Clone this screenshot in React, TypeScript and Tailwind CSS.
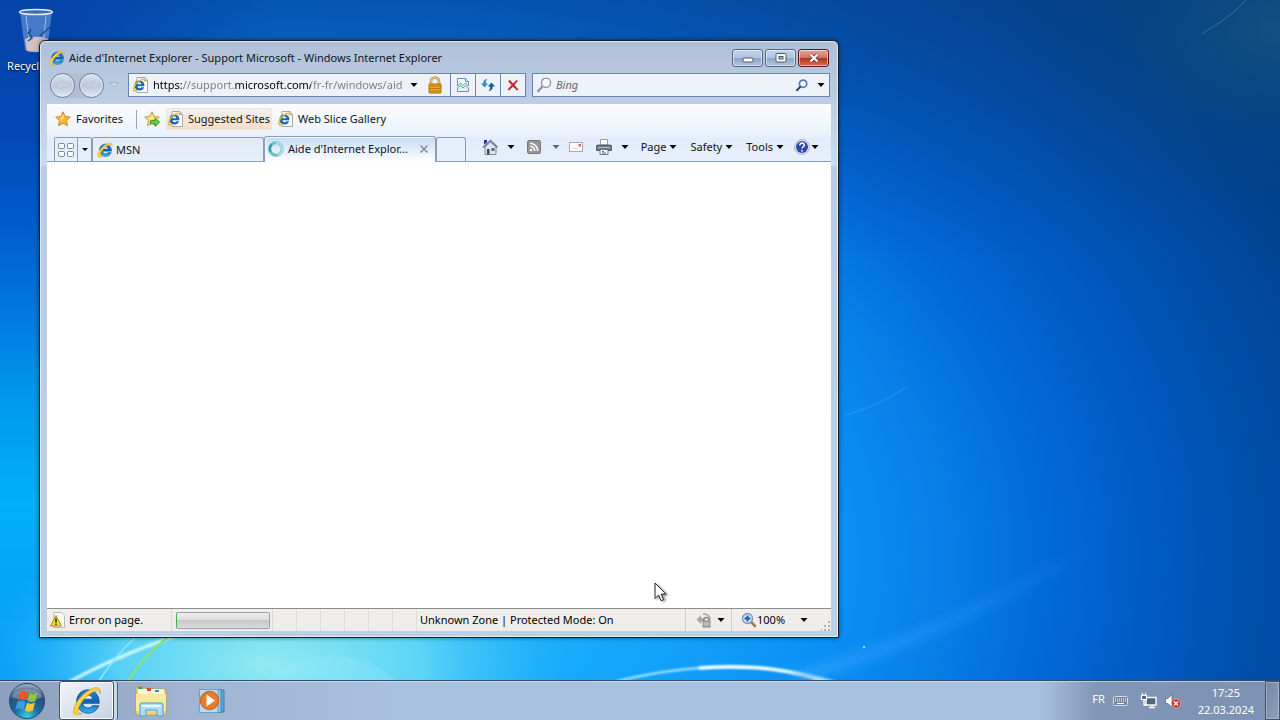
import React from "react";

function IeIcon({ className }: { className: string }) {
  return (
    <svg viewBox="0 0 32 32" className={className} aria-hidden="true">
      <defs>
        <linearGradient id="ie-blue" x1="0" y1="0" x2="0" y2="1">
          <stop offset="0" stopColor="#2a83cc" />
          <stop offset="0.5" stopColor="#0f63b4" />
          <stop offset="1" stopColor="#37b6ee" />
        </linearGradient>
      </defs>
      <path
        d="M17 4C10 4 5 9.500 5 16.500S10 29 17 29c5.500 0 10-3.200 11.600-8h-7c-.9 1.500-2.600 2.400-4.600 2.400-3.200 0-5.300-2-5.500-4.900H29C29.600 10.500 24.500 4 17 4zm-5.300 10.200c.5-2.700 2.500-4.600 5.300-4.600s4.800 1.900 5.200 4.600z"
        fill="url(#ie-blue)"
        stroke="#0c4a8c"
        strokeWidth="0.800"
      />
      <path
        d="M30 8.500C31.500 2 27 .2 20.500 3.200 11.500 7.500 3.500 17 1.800 25c-1.200 6 3.200 7.300 9 4-4 .8-5.200-1.200-4-5C9 17.500 15 10.500 22.500 6.400c4-2.200 7-2 7.500 2.100z"
        fill="#fbd240"
        stroke="#cf9718"
        strokeWidth="0.700"
      />
    </svg>
  );
}

function IePage() {
  return (
    <svg viewBox="0 0 16 16" className="size-4 shrink-0" aria-hidden="true">
      <path d="M4 .5h8l2.500 3v12H4z" fill="#fdfdfd" stroke="#a7a7a7" />
      <path d="M12 .5v3h2.500" fill="none" stroke="#a7a7a7" />
      <path
        d="M6.500 3.500a5 5 0 1 0 4.600 6.800H8.500c-.4.600-1 .9-1.900.9-1.300 0-2.100-.7-2.200-1.900h7c.3-3.200-1.700-5.800-4.900-5.800zM4.500 7.300c.2-1 1-1.700 2-1.700s1.800.7 2 1.700z"
        fill="#1668b4"
      />
      <path d="M11.300 4.600c.9-2.500-1-2.800-3.700-1.400C4.300 5 1.200 8.800.8 11.800c-.3 2.200 1.100 2.700 3 1.700" fill="none" stroke="#ecb92a" strokeWidth="1.500" />
    </svg>
  );
}

function Caret({ className = "text-black" }: { className?: string }) {
  return (
    <svg viewBox="0 0 8 4" className={`h-1 w-2 shrink-0 ${className}`} aria-hidden="true">
      <path d="M.5 0h7L4 4z" fill="currentColor" />
    </svg>
  );
}

function Star({ arrow = false }: { arrow?: boolean }) {
  return (
    <svg viewBox="0 0 16 16" className="size-4 shrink-0" aria-hidden="true">
      <path
        d="M8 .8l2.200 4.700 5.100.6-3.800 3.500 1 5.100L8 12.200l-4.500 2.500 1-5.100L.7 6.100l5.100-.6z"
        fill={arrow ? "#f7dc6a" : "#fbb62c"}
        stroke={arrow ? "#a99a3a" : "#c97d14"}
        strokeWidth="0.900"
      />
      <path d="M8 3l1.300 3.300-3.800 4.500.5-3.300L3.200 7l3.300-.6z" fill="#fff1a8" opacity="0.700" />
      {arrow && <path d="M6.500 9.700H11V7.300l4.600 3.900L11 15.200v-2.400H6.500z" fill="#6fd044" stroke="#2a8a1d" strokeWidth="0.900" />}
    </svg>
  );
}

function RoundNav({ label, flip = false }: { label: string; flip?: boolean }) {
  return (
    <button
      aria-label={label}
      className="flex size-[25px] shrink-0 items-center justify-center rounded-full border border-[#6d7f98] bg-linear-to-b from-[#dde5ef] via-[#b9c8da] to-[#dfe9f4] shadow-[inset_0_0_0_1px_#e4ebf4]"
    >
      <svg viewBox="0 0 16 16" className={flip ? "size-4 rotate-180" : "size-4"} aria-hidden="true">
        <path d="M2 8l5-5v3.500h7v3H7V13z" fill="#c6d3e2" stroke="#b3c1d3" strokeWidth="0.500" />
      </svg>
    </button>
  );
}

function Wallpaper() {
  return (
    <svg viewBox="0 0 1280 720" preserveAspectRatio="none" className="absolute inset-0 h-full w-full" aria-hidden="true">
      <defs>
        <radialGradient id="sky" gradientUnits="userSpaceOnUse" cx="0" cy="0" r="1" gradientTransform="translate(300 560) scale(1300 950)">
          <stop offset="0" stopColor="#35c3fa" />
          <stop offset="0.250" stopColor="#16a8fb" />
          <stop offset="0.420" stopColor="#0a8ff4" />
          <stop offset="0.500" stopColor="#067ee6" />
          <stop offset="0.570" stopColor="#026ada" />
          <stop offset="0.650" stopColor="#005cc4" />
          <stop offset="0.730" stopColor="#004fac" />
          <stop offset="0.830" stopColor="#00438e" />
          <stop offset="1" stopColor="#003e80" />
        </radialGradient>
        <radialGradient id="dusk" gradientUnits="userSpaceOnUse" cx="0" cy="0" r="1" gradientTransform="translate(1280 30) scale(300 200)">
          <stop offset="0" stopColor="#18547e" stopOpacity="0.800" />
          <stop offset="0.400" stopColor="#0d4a7e" stopOpacity="0.400" />
          <stop offset="1" stopColor="#00438e" stopOpacity="0" />
        </radialGradient>
        <radialGradient id="glow" gradientUnits="userSpaceOnUse" cx="0" cy="0" r="1" gradientTransform="translate(270 665) scale(300 150)">
          <stop offset="0" stopColor="#93eaf0" />
          <stop offset="0.500" stopColor="#70e0f5" stopOpacity="0.750" />
          <stop offset="1" stopColor="#30c0fa" stopOpacity="0" />
        </radialGradient>
        <linearGradient id="shade" x1="0" y1="0" x2="0" y2="1">
          <stop offset="0" stopColor="#0b3f86" stopOpacity="0.450" />
          <stop offset="1" stopColor="#0b3f86" stopOpacity="0" />
        </linearGradient>
        <linearGradient id="edge" x1="0" y1="0" x2="0" y2="1">
          <stop offset="0" stopColor="#0643a8" />
          <stop offset="0.180" stopColor="#0348b4" />
          <stop offset="0.300" stopColor="#0059cb" />
          <stop offset="0.440" stopColor="#007ae0" />
          <stop offset="0.560" stopColor="#009aec" />
          <stop offset="0.700" stopColor="#02b0f6" />
          <stop offset="0.820" stopColor="#04a4fb" />
          <stop offset="0.950" stopColor="#0398f4" />
        </linearGradient>
        <linearGradient id="fade" x1="0" y1="0" x2="1" y2="0">
          <stop offset="0.200" stopColor="#fff" />
          <stop offset="1" stopColor="#000" />
        </linearGradient>
        <linearGradient id="beam" x1="0" y1="1" x2="1" y2="0">
          <stop offset="0" stopColor="#3aa8ff" stopOpacity="0.500" />
          <stop offset="1" stopColor="#2c8cff" stopOpacity="0" />
        </linearGradient>
        <mask id="edge-mask">
          <rect width="260" height="720" fill="url(#fade)" />
        </mask>
        <filter id="soft" x="-20%" y="-50%" width="140%" height="200%">
          <feGaussianBlur stdDeviation="1.200" />
        </filter>
        <filter id="softer" x="-20%" y="-50%" width="140%" height="200%">
          <feGaussianBlur stdDeviation="5" />
        </filter>
      </defs>
      <rect width="1280" height="720" fill="url(#sky)" />
      <rect width="1280" height="260" fill="url(#shade)" />
      <rect width="1280" height="720" fill="url(#dusk)" />
      <rect width="260" height="720" fill="url(#edge)" mask="url(#edge-mask)" />
      <rect width="1280" height="720" fill="url(#glow)" />
      <ellipse cx="330" cy="700" rx="72" ry="44" fill="#9cecff" opacity="0.250" />
      <g fill="none" strokeLinecap="round">
        <path d="M66 684C100 664 140 648 186 632" stroke="#d4fbff" strokeWidth="3" filter="url(#soft)" />
        <path d="M98 682c14-20 26-36 44-50" stroke="#8eeaff" strokeWidth="1.500" />
        <path d="M126 684c14-22 28-38 52-54" stroke="#86e27c" strokeWidth="2.500" />
        <path d="M618 681c40-10 90-16 130-14 40 2 66 8 96 18" stroke="#b8f0ff" strokeWidth="2" filter="url(#soft)" />
        <path d="M700 668c54-3 92 1 134 17" stroke="#ffffff" strokeWidth="3" filter="url(#soft)" />
        <path d="M800 676C900 650 1010 596 1100 540" stroke="url(#beam)" strokeWidth="14" filter="url(#softer)" />
        <path d="M845 415c20-5 40-14 62-28" stroke="#3aa5f2" strokeWidth="1" opacity="0.600" />
        <path d="M1202 34c14-10 28-16 44-34" stroke="#4f8cb8" strokeWidth="1" opacity="0.600" />
      </g>
      <circle cx="864" cy="647" r="1.200" fill="#9fd8ff" />
    </svg>
  );
}

function RecycleBin() {
  return (
    <a href="#recycle-bin" className="absolute top-2 left-1 flex w-[64px] flex-col items-center gap-1 text-[11px] leading-4 text-white">
      <svg viewBox="0 0 40 46" className="h-[46px] w-10" aria-hidden="true">
        <path d="M4 4l5 38c1 3 21 3 22 0l5-38z" fill="#7ba5dc" opacity="0.550" />
        <path d="M9 31l1.500 11c2 2.500 18 2.500 20 0L32 31c-6-3-17-3-23 0z" fill="#e6c6b8" opacity="0.900" />
        <path d="M10 8l4 32M30 8l-3 32" stroke="#bcd7f5" strokeWidth="1" opacity="0.700" />
        <path d="M12 24l4 6-4 3M15 21l-2 4M34 19l-10 9" fill="none" stroke="#174d93" strokeWidth="1.500" />
        <ellipse cx="20" cy="4" rx="16.500" ry="2.600" fill="#3d6eb2" stroke="#dbe8f5" strokeWidth="1.500" />
      </svg>
      <span className="whitespace-nowrap [text-shadow:0_1px_2px_#000]">Recycle Bin</span>
    </a>
  );
}

function TitleBar() {
  const base =
    "flex h-[18px] w-[31px] items-center justify-center rounded-[3px] border shadow-[inset_0_0_0_1px_rgba(255,255,255,0.5)]";
  const plain = " border-[#54678a] bg-[linear-gradient(#c3d3e8_0,#b2c5de_50%,#8ea7c8_50%,#adc5e0_100%)]";
  return (
    <header className="flex h-[31px] items-center gap-1 pt-[3px] pl-[2px]">
      <IeIcon className="size-4 shrink-0" />
      <h1 className="min-w-0 flex-1 truncate">Aide d'Internet Explorer - Support Microsoft - Windows Internet Explorer</h1>
      <div className="flex gap-[2px] pr-[2px]">
        <button aria-label="Minimize" className={base + plain}>
          <svg viewBox="0 0 12 10" className="h-[10px] w-3" aria-hidden="true">
            <rect x="1" y="5" width="10" height="4" rx="1" fill="#fff" stroke="#4e5a6e" />
          </svg>
        </button>
        <button aria-label="Maximize" className={base + plain}>
          <svg viewBox="0 0 12 10" className="h-[10px] w-3" aria-hidden="true">
            <rect x="1" y=".5" width="10" height="8.500" rx="1" fill="#fff" stroke="#4e5a6e" />
            <rect x="4" y="3.500" width="4" height="2.500" fill="#9fb6d3" stroke="#4e5a6e" />
          </svg>
        </button>
        <button
          aria-label="Close"
          className={base + " border-[#5c1a20] bg-[linear-gradient(#e3a398_0,#d17263_50%,#b5301c_50%,#d0704f_100%)]"}
        >
          <svg viewBox="0 0 12 10" className="h-[10px] w-3" aria-hidden="true">
            <path d="M2.500 1.500l7 7m0-7l-7 7" stroke="#5a3a40" strokeWidth="3.600" />
            <path d="M2.500 1.500l7 7m0-7l-7 7" stroke="#fff" strokeWidth="2.200" />
          </svg>
        </button>
      </div>
    </header>
  );
}

function Navigation() {
  const cell = "flex h-full w-[25px] shrink-0 items-center justify-center border-l border-[#6a85ab]";
  return (
    <div className="mb-[6px] flex h-[26px] items-center">
      <div className="ml-[3px] flex gap-1 rounded-full bg-[#b0bfd2]">
        <RoundNav label="Back" />
        <RoundNav label="Forward" flip />
      </div>
      <button aria-label="Recent pages" className="ml-1 flex w-3 justify-center">
        <svg viewBox="0 0 10 6" className="h-[6px] w-[10px]" aria-hidden="true">
          <path d="M1 .7h8L5 5z" fill="#cfdcec" stroke="#95a6bf" strokeWidth="0.800" />
        </svg>
      </button>
      <div className="ml-2 flex h-6 w-[398px] shrink items-center border border-[#6a85ab] bg-[#eef3fa]">
        <div className="pl-1"><IePage /></div>
        <input
          aria-label="Address"
          readOnly
          defaultValue="https://support.microsoft.com/fr-fr/windows/aide-d-internet-explorer"
          className="ml-1 min-w-0 flex-1 bg-[linear-gradient(90deg,#000_29px,#7b7b7b_29px,#7b7b7b_82px,#000_82px,#000_158px,#7b7b7b_158px)] bg-clip-text text-transparent outline-none"
        />
        <button aria-label="Show address list" className="flex w-6 justify-center"><Caret /></button>
        <button aria-label="Security report" className="mr-[6px] flex w-[18px] justify-center">
          <svg viewBox="0 0 16 18" className="h-[18px] w-4" aria-hidden="true">
            <path d="M4 9V5.500a4 4 0 0 1 8 0V9" fill="none" stroke="#a98136" strokeWidth="2.600" />
            <path d="M4 9V5.500a4 4 0 0 1 8 0V9" fill="none" stroke="#e9d7a0" strokeWidth="1.200" />
            <rect x="2" y="8" width="12" height="9" rx="0.500" fill="#efa51d" stroke="#a86a0c" />
            <path d="M2.500 10h11M2.500 12.500h11M2.500 15h11" stroke="#b9770f" strokeWidth="0.900" />
          </svg>
        </button>
        <button aria-label="Compatibility view" className={cell}>
          <svg viewBox="0 0 14 16" className="h-4 w-[14px]" aria-hidden="true">
            <path d="M1.500 9V1.500h8l3 3V9l-3-3L7 8.500 4.500 6z" fill="#f1f9f9" stroke="#4d91a5" strokeWidth="0.900" />
            <path d="M9.500 1.500v3h3M1.500 11l3-2.500L7 11l2.500-2.500 3 2.500v3.500h-11z" fill="#dff1f1" stroke="#4d91a5" strokeWidth="0.900" />
          </svg>
        </button>
        <button aria-label="Refresh" className={cell}>
          <svg viewBox="0 0 16 16" className="size-4" aria-hidden="true">
            <path d="M.8 6.500h2.400C3.200 3.600 4.800 2 7.600 1.800 6.200 2.900 5.800 4.200 5.900 6.500h2.400L4.500 10.600z" fill="#3a8fc8" />
            <path d="M15.200 9.500h-2.400c0 2.900-1.600 4.500-4.400 4.700 1.400-1.100 1.800-2.400 1.700-4.700H7.700L11.500 5.400z" fill="#1f5c96" />
          </svg>
        </button>
        <button aria-label="Stop" className={cell}>
          <svg viewBox="0 0 14 14" className="size-[14px]" aria-hidden="true">
            <path d="M2 3l2-1 3 3.500L10.500 2l1.500.8L8.500 7l4 4.500-1.500 1L7 8.700 3 12.500 1.500 11.500 5.500 7z" fill="#c5282c" />
          </svg>
        </button>
      </div>
      <form className="mr-[1px] ml-[6px] flex h-6 min-w-0 flex-1 items-center border border-[#6a85ab] bg-[#eef3fa]" onSubmit={(e) => e.preventDefault()}>
        <svg viewBox="0 0 16 16" className="ml-[3px] size-4 shrink-0" aria-hidden="true">
          <circle cx="10" cy="5.800" r="4.600" fill="#f5f8fb" stroke="#8b939c" strokeWidth="1.300" />
          <path d="M6.600 9.300L1.500 14.800" stroke="#8b939c" strokeWidth="2.200" />
        </svg>
        <input aria-label="Search Bing" placeholder="Bing" className="ml-1 min-w-0 flex-1 bg-transparent italic outline-none placeholder:text-[#666]" />
        <button aria-label="Search" className="flex w-5 justify-center">
          <svg viewBox="0 0 14 14" className="size-[13px]" aria-hidden="true">
            <circle cx="8.700" cy="5" r="3.900" fill="#fff" stroke="#4e7fa8" strokeWidth="1.900" />
            <path d="M6 8L1.500 12.800" stroke="#23466e" strokeWidth="2.200" />
          </svg>
        </button>
        <button aria-label="Search options" className="mr-[-2px] flex w-5 justify-center"><Caret /></button>
      </form>
    </div>
  );
}

function FavoritesBar() {
  return (
    <nav aria-label="Favorites bar" className="flex h-[30px] items-center pl-2">
      <button className="flex items-center gap-[5px]"><Star />Favorites</button>
      <span className="ml-[13px] h-[19px] w-px bg-[#97a5b8]" />
      <button aria-label="Add to Favorites bar" className="ml-[7px]"><Star arrow /></button>
      <a href="#suggested-sites" className="ml-[6px] flex h-[22px] items-center gap-1 border border-[#ebe6e4] bg-linear-to-b from-[#f3f0ef] to-[#f5dec6] pr-[1px] pl-[1px] whitespace-nowrap">
        <IePage />Suggested Sites
      </a>
      <a href="#web-slice-gallery" className="ml-[6px] flex items-center gap-1 whitespace-nowrap">
        <IePage />Web Slice Gallery
      </a>
    </nav>
  );
}

function TabBar() {
  return (
    <div className="flex h-7 items-end border-b border-[#8c9cb4]">
      <div className="ml-[7px] flex h-6 shrink-0 rounded-t-[2px] border border-b-0 border-[#8c9cb4]">
        <button aria-label="Quick tabs" className="flex w-[22px] items-center justify-center">
          <svg viewBox="0 0 16 14" className="h-[14px] w-4" aria-hidden="true">
            <g fill="#f6f8fb" stroke="#7b8799">
              <rect x=".5" y=".5" width="6" height="5" rx="1" />
              <rect x="9.500" y=".5" width="6" height="5" rx="1" />
              <rect x=".5" y="8.500" width="6" height="5" rx="1" />
              <rect x="9.500" y="8.500" width="6" height="5" rx="1" />
            </g>
          </svg>
        </button>
        <button aria-label="Tab list" className="flex w-[14px] items-center justify-center border-l border-[#8c9cb4]">
          <svg viewBox="0 0 6 3" className="h-[3px] w-[6px]" aria-hidden="true"><path d="M0 0h6L3 3z" /></svg>
        </button>
      </div>
      <div role="tablist" className="flex min-w-0 items-end">
        <button role="tab" aria-selected="false" className="flex h-6 w-[172px] min-w-0 items-center gap-[3px] rounded-t-[3px] border border-b-0 border-[#8c9cb4] bg-linear-to-b from-[#e4ebf5] to-[#e6effa] pl-1">
          <IeIcon className="size-4 shrink-0" />MSN
        </button>
        <div className="-mb-px flex h-[26px] w-[172px] min-w-0 items-center rounded-t-[3px] border border-b-0 border-[#8c9cb4] bg-linear-to-b from-[#c5dbf3] to-white pb-[1px] pl-[3px] shadow-[inset_1px_1px_0_#f4f8fd]">
          <button role="tab" aria-selected="true" className="flex min-w-0 flex-1 items-center gap-1 whitespace-nowrap">
            <svg viewBox="0 0 16 16" className="size-4 shrink-0" aria-hidden="true">
              <circle cx="8" cy="8" r="6.200" fill="none" stroke="#6fbcc4" strokeWidth="3" />
              <path d="M8 1.800a6.200 6.200 0 0 1 6.200 6.200c0 3-2 5.200-4.600 6" fill="none" stroke="#a9e2e4" strokeWidth="2" />
              <path d="M2.500 11a6.200 6.200 0 0 1 1.200-7.500" fill="none" stroke="#2b98a5" strokeWidth="2" />
            </svg>
            Aide d'Internet Explor...
          </button>
          <button aria-label="Close tab" className="mr-[6px] flex size-[10px] items-center justify-center">
            <svg viewBox="0 0 10 10" className="size-[10px]" aria-hidden="true">
              <path d="M1.500 1.500l7 7m0-7l-7 7" stroke="#85909e" strokeWidth="1.700" />
            </svg>
          </button>
        </div>
        <button aria-label="New tab" className="h-6 w-[30px] rounded-t-[3px] border border-b-0 border-[#8c9cb4] bg-[#e6effa]" />
      </div>
      <div role="toolbar" aria-label="Command bar" className="mb-[2px] ml-auto flex h-6 items-center pr-3">
        <button aria-label="Home">
          <svg viewBox="0 0 16 16" className="size-4" aria-hidden="true">
            <path d="M3 8v7.500h11V8L8.500 3z" fill="#dfe3ec" stroke="#747f95" strokeWidth="0.900" />
            <path d="M1 8.500L8.500 1.500 15.500 8.500" fill="none" stroke="#6f7c98" strokeWidth="1.600" />
            <path d="M2 1h3v2.500L2 5.500z" fill="#27309e" />
            <path d="M5 10h2.500v5.500H5z" fill="#3d465c" />
            <path d="M9.500 9h3v3h-3z" fill="#59668a" />
          </svg>
        </button>
        <button aria-label="Home options" className="ml-[9px]"><Caret /></button>
        <button aria-label="Feeds" className="ml-[12px]">
          <svg viewBox="0 0 14 14" className="size-[14px]" aria-hidden="true">
            <rect x=".5" y=".5" width="13" height="13" rx="1.500" fill="#969696" stroke="#787878" />
            <circle cx="4" cy="10" r="1.300" fill="#fff" />
            <path d="M3 6.200A4.800 4.800 0 0 1 7.800 11M3 3.200A7.800 7.800 0 0 1 10.800 11" fill="none" stroke="#fff" strokeWidth="1.500" />
          </svg>
        </button>
        <button aria-label="Feed options" className="ml-[11px]"><Caret className="text-[#63686f]" /></button>
        <button aria-label="Read mail" className="ml-[9px]">
          <svg viewBox="0 0 14 10" className="h-[10px] w-[14px]" aria-hidden="true">
            <rect x=".5" y=".5" width="13" height="9" fill="#fbfbfb" stroke="#a7a7ad" />
            <path d="M9.500 2h2.500v2.500H9.500z" fill="#e0694c" />
            <path d="M3 6.500h5" stroke="#d9d9dc" />
          </svg>
        </button>
        <button aria-label="Print" className="ml-[13px]">
          <svg viewBox="0 0 16 16" className="size-4" aria-hidden="true">
            <path d="M4.500.5h7V6h-7z" fill="#fdfdfd" stroke="#9aa0a8" />
            <path d="M1 6h14c.6 1 .9 3 .5 5.500H.5C.1 9 .4 7 1 6z" fill="#6d737c" stroke="#4a4f57" strokeWidth="0.800" />
            <path d="M2 8.500h12" stroke="#b9bec6" />
            <path d="M4 10.500h8v5H4z" fill="#f4f6f9" stroke="#747a84" />
            <path d="M6 12.500h2M6 14h4" stroke="#4d6a9c" />
          </svg>
        </button>
        <button aria-label="Print options" className="ml-[9px]"><Caret /></button>
        <button className="ml-[12px] flex items-center gap-[3px]">Page<Caret /></button>
        <button className="ml-[13px] flex items-center gap-[3px]">Safety<Caret /></button>
        <button className="ml-[13px] flex items-center gap-[3px]">Tools<Caret /></button>
        <button aria-label="Help" className="ml-[10px] flex items-center gap-[1px]">
          <svg viewBox="0 0 16 16" className="size-4" aria-hidden="true">
            <circle cx="8" cy="8" r="7.400" fill="#e8ebf3" stroke="#9ba4bb" strokeWidth="0.800" />
            <circle cx="8" cy="8" r="6" fill="#2c4aa8" />
            <path d="M5.800 6.300c0-3 4.500-2.900 4.500-.3 0 1.700-2.200 1.800-2.200 3.500M8 11v1.600" fill="none" stroke="#fff" strokeWidth="1.600" />
          </svg>
          <Caret />
        </button>
      </div>
    </div>
  );
}

function StatusBar() {
  return (
    <footer className="flex h-[23px] shrink-0 items-stretch border-t border-[#8a8d91] bg-linear-to-b from-[#f1eeec] to-[#efedea] text-black">
      <div className="flex w-[125px] items-center gap-[3px] border-r border-[#dcdad8] pl-[3px]">
        <svg viewBox="0 0 16 16" className="size-4" aria-hidden="true">
          <path d="M4 .5h7.500l3 3v12H4z" fill="#fdfdfd" stroke="#b9b9b9" />
          <path d="M6 3.500L11.500 14H.5z" fill="#f7dd20" stroke="#a98f10" strokeLinejoin="round" />
          <path d="M6 6.500v4M6 11.500V13" stroke="#222" strokeWidth="1.500" />
        </svg>
        Error on page.
      </div>
      <div className="flex w-[101px] items-center border-r border-[#dcdad8] pl-1">
        <div
          role="progressbar"
          aria-label="Page loading"
          aria-valuenow={1}
          className="h-[17px] w-[94px] rounded-[2px] border border-[#a0a0a0] border-l-[#3fb556] bg-[linear-gradient(#ededed_0,#dedede_45%,#c8c8c8_50%,#d9d9d9_100%)]"
        />
      </div>
      {[0, 1, 2, 3, 4, 5].map((n) => (
        <span key={n} className="w-6 border-r border-[#dfddda]" />
      ))}
      <div className="flex min-w-0 flex-1 items-center truncate pl-[3px]">Unknown Zone | Protected Mode: On</div>
      <button aria-label="InPrivate filtering" className="flex w-[46px] items-center justify-center gap-[5px] border-l border-[#d2d0ce] pl-1">
        <svg viewBox="0 0 16 16" className="size-4" aria-hidden="true">
          <path d="M7 2a6 6 0 0 1 7 6" fill="none" stroke="#b3b3b3" strokeWidth="2" />
          <path d="M.5 7.500L5 3v9zM5 6h3v3.500H5z" fill="#a8a8a8" />
          <path d="M8 9.500V8a2.500 2.500 0 0 1 5 0v1.500" fill="none" stroke="#8c8c8c" strokeWidth="1.400" />
          <rect x="7" y="9" width="7" height="6" fill="#a6a6a6" stroke="#7c7c7c" strokeWidth="0.800" />
          <path d="M7.500 11h6M7.500 13h6" stroke="#e4e4e4" strokeWidth="0.700" />
        </svg>
        <Caret />
      </button>
      <button aria-label="Zoom level" className="flex w-[100px] items-center border-l border-[#d2d0ce] pl-[9px]">
        <svg viewBox="0 0 16 16" className="size-4" aria-hidden="true">
          <path d="M9.500 9.500L14 14" stroke="#a8784a" strokeWidth="2.600" strokeLinecap="round" />
          <circle cx="6.500" cy="6.500" r="5" fill="#d7e8fb" stroke="#7d93b8" strokeWidth="1.300" />
          <path d="M6.500 3.500v6M3.500 6.500h6" stroke="#1c55b4" strokeWidth="2" />
        </svg>
        100%
        <span className="ml-[15px]"><Caret /></span>
        <svg viewBox="0 0 10 10" className="mt-auto ml-auto size-[10px]" fill="#b4b2b0" aria-hidden="true">
          <path d="M7 0h2v2H7zM7 4h2v2H7zM3 4h2v2H3zM7 8h2v2H7zM3 8h2v2H3zM0 8h1v2H0z" />
        </svg>
      </button>
    </footer>
  );
}

function BrowserWindow() {
  return (
    <section
      aria-label="Windows Internet Explorer"
      className="absolute top-10 bottom-[42px] left-[39px] flex w-[62.5%] flex-col rounded-t-[6px] border border-[#14202e] bg-[linear-gradient(#b0c0d9_0,#bdcde3_60px,#cbdcee_124px,#b9cce3_126px,#bccfe4_100%)] px-[7px] pb-[6px] text-[#0c1622] shadow-[inset_0_0_0_1px_rgba(235,248,255,0.75),0_0_4px_rgba(0,0,0,0.5)]"
    >
      <TitleBar />
      <Navigation />
      <div className="flex min-h-0 flex-1 flex-col">
        <div className="bg-[linear-gradient(#fbfdff_0,#edf4fc_45%,#e3edf9_60%,#e6effa_100%)]">
          <FavoritesBar />
          <TabBar />
        </div>
        <main className="min-h-0 flex-1 bg-white" />
        <StatusBar />
      </div>
    </section>
  );
}

function Taskbar() {
  return (
    <footer className="relative flex h-10 shrink-0 items-stretch border-t border-[#2f4d73] bg-[linear-gradient(90deg,#8c9fbd_0,#a0b4d1_180px,#a8c1de_400px,#a8c1de_calc(100%-240px),#8197b6_calc(100%-185px),#7c91b2_100%)] shadow-[inset_0_1px_0_rgba(220,235,250,0.6)]">
      <button aria-label="Start" className="ml-2 flex items-center">
        <svg viewBox="0 0 38 38" className="size-[38px]" aria-hidden="true">
          <defs>
            <radialGradient id="orb" cx="0.5" cy="0.950" r="0.900">
              <stop offset="0" stopColor="#3fd0ea" />
              <stop offset="0.400" stopColor="#146c9c" />
              <stop offset="0.750" stopColor="#2d4f78" />
              <stop offset="1" stopColor="#93a9bf" />
            </radialGradient>
          </defs>
          <circle cx="19" cy="19" r="17.500" fill="url(#orb)" stroke="#26476b" />
          <path d="M4 15C7 5 31 5 34 15 28 19 10 19 4 15z" fill="#fff" opacity="0.280" />
          <path d="M12 10c3-2 5-1.500 8 .3l-2 8c-3-1.800-5-2-8-.5z" fill="#e8562b" />
          <path d="M21.500 11c3 1.500 5 1.500 8 0l-2 8c-3 1.500-5 1.300-8-.2z" fill="#8cc63c" />
          <path d="M9.500 19.500c3-1.600 5-1.300 8 .4l-2 8c-3-1.800-5-2-8-.4z" fill="#3d9be6" />
          <path d="M19 20.500c3 1.600 5 1.600 8 .1l-2 8c-3 1.500-5 1.400-8-.1z" fill="#fcc72c" />
        </svg>
      </button>
      <button aria-label="Internet Explorer" className="ml-[13px] flex w-[59px] items-stretch">
        <span className="flex w-[55px] items-center justify-center rounded-[3px] border border-[#3c5474] bg-linear-to-br from-[#f2f5fa] to-[#c5d1e2] shadow-[inset_0_0_0_1px_#fff]">
          <IeIcon className="size-[30px]" />
        </span>
        <span className="w-1 rounded-r-[3px] border-r border-[#4b6485] bg-[#ccd8e7]" />
      </button>
      <button aria-label="Windows Explorer" className="ml-4 flex items-center">
        <svg viewBox="0 0 34 32" className="h-8 w-[34px]" aria-hidden="true">
          <path d="M2 2h8l2 2h18l2 2v24H2z" fill="#e9d888" stroke="#b59b3e" strokeWidth="0.800" />
          <path d="M4 4h26v5H4z" fill="#fdf6cf" />
          <path d="M4 2h5v2H4z" fill="#3aa853" />
          <path d="M13 3h4v3h-4z" fill="#d8492c" />
          <path d="M21 5h4v2h-4z" fill="#3b80c8" />
          <path d="M2 9h30v17H2z" fill="#f5e99e" />
          <path d="M6 31V20q0-2 2-2h19q2 0 2 2v11h-6v-6H12v6z" fill="#a9def4" stroke="#4f9cc5" />
          <path d="M8 21h19" stroke="#e8f9ff" strokeWidth="2" />
        </svg>
      </button>
      <button aria-label="Windows Media Player" className="ml-[31px] flex items-center">
        <svg viewBox="0 0 27 26" className="h-[26px] w-[27px]" aria-hidden="true">
          <path d="M5 2h20v22H5z" fill="#58a5d6" stroke="#3b7faf" />
          <path d="M3 1.500h19v23H3z" fill="#8fc8ea" stroke="#4687b6" />
          <path d="M.5 1.500h18.500v23H.5z" fill="#b4dbf2" stroke="#6aa2cb" />
          <circle cx="10.500" cy="12.500" r="9.200" fill="#ec7a28" stroke="#c9591a" />
          <path d="M7.500 6.500l8.500 6-8.500 6z" fill="#fff" />
        </svg>
      </button>
      <div className="ml-auto flex items-center text-white">
        <button aria-label="Input language" className="pb-1">FR</button>
        <button aria-label="Keyboard" className="ml-[8px]">
          <svg viewBox="0 0 15 10" className="h-[10px] w-[15px]" aria-hidden="true">
            <rect x=".5" y=".5" width="14" height="9" rx="1" fill="#7787a0" stroke="#d3dbe6" />
            <path d="M2 3h11M2 5h11" stroke="#fff" strokeDasharray="1 1" />
            <path d="M4 7.500h7" stroke="#fff" />
          </svg>
        </button>
        <button aria-label="Network" className="ml-3">
          <svg viewBox="0 0 18 16" className="h-4 w-[18px]" aria-hidden="true">
            <rect x="6" y="4.500" width="10" height="7.500" fill="#53647f" stroke="#fff" strokeWidth="1.400" />
            <path d="M9 14.500h6M12 12v2.500M4 7v5h2.500" fill="none" stroke="#fff" strokeWidth="1.300" />
            <path d="M1.500 2.500h5v4h-5zM2.500 0v2.500M5.500 0v2.500" fill="#53647f" stroke="#fff" strokeWidth="1.200" />
          </svg>
        </button>
        <button aria-label="Volume muted" className="ml-[6px]">
          <svg viewBox="0 0 18 16" className="h-4 w-[18px]" aria-hidden="true">
            <path d="M1.500 5.500h2.500L8 1.500v13L4 10.500H1.500z" fill="#fff" stroke="#4d5d77" strokeWidth="0.700" />
            <circle cx="12" cy="10.500" r="4.600" fill="#d5302a" stroke="#f0c8c4" strokeWidth="0.600" />
            <path d="M10 8.500l4 4m0-4l-4 4" stroke="#fff" strokeWidth="1.400" />
          </svg>
        </button>
        <time dateTime="2024-03-22T17:25" className="mr-[11px] ml-[16px] flex flex-col text-center leading-[17px]">
          <span>17:25</span>
          <span>22.03.2024</span>
        </time>
        <button aria-label="Show desktop" className="h-full w-[15px] border border-[#41536e] bg-linear-to-br from-[#7486a1] to-[#8fa2bc] shadow-[inset_0_0_0_1px_rgba(210,225,240,0.4)]" />
      </div>
    </footer>
  );
}

export default function App() {
  return (
    <div className="relative flex h-screen flex-col overflow-hidden bg-[#0066d6] font-['Noto_Sans','Open_Sans',sans-serif] text-[11px] leading-4">
      <Wallpaper />
      <div className="relative min-h-0 flex-1">
        <RecycleBin />
        <BrowserWindow />
        <svg viewBox="0 0 16 22" className="pointer-events-none absolute top-[582px] left-[654px] h-[22px] w-4 drop-shadow-[2px_1px_1px_rgba(0,0,0,0.4)]" aria-hidden="true">
          <path d="M1 1v15.500l3.600-3.400 2.400 5.600 2.600-1.100-2.400-5.500H12z" fill="#fff" stroke="#222" />
        </svg>
      </div>
      <Taskbar />
    </div>
  );
}
